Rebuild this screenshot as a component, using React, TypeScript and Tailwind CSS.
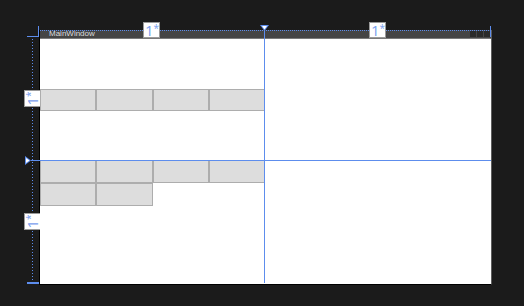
import React from 'react';

// WPF designer surface: window with a 2x2 grid, rulers and splitter adorners

const Cell: React.FC<{ tall?: boolean }> = ({ tall }) => (
  <div className={`${tall ? 'h-[23px]' : 'h-[22px]'} bg-[#dddddd] border border-[#adadad]`} />
);

const ColLabel: React.FC<{ left: string }> = ({ left }) => (
  <div
    className={`absolute ${left} top-[22px] w-[17px] h-[16px] bg-white border border-[#9a9a9a] flex items-center justify-center text-[15px] leading-none text-[#7aa0ee]`}
    style={{ fontFamily: '"Open Sans", "Liberation Sans", sans-serif' }}
  >
    <span className="pl-[1px]">1<span className="text-[10px] align-[4px]">*</span></span>
  </div>
);

const RowLabel: React.FC<{ top: string }> = ({ top }) => (
  <div
    className={`absolute left-[24px] ${top} w-[16px] h-[17px] bg-white border border-[#9a9a9a] border-r-0 flex items-center justify-center text-[15px] leading-none text-[#7aa0ee]`}
    style={{ fontFamily: '"Open Sans", "Liberation Sans", sans-serif' }}
  >
    <span className="-rotate-90 inline-block">1<span className="text-[10px] align-[4px]">*</span></span>
  </div>
);

const App: React.FC = () => {
  return (
    <div className="relative w-[524px] h-[306px] bg-[#1b1b1b] pl-[39px] pt-[30px] overflow-hidden">
      {/* window */}
      <div className="w-[453px] border-l border-r border-b border-l-black border-r-[#5e5e5e] border-b-black flex flex-col">
        <div className="h-[9px] bg-[#454545] border-b border-[#7a7a7a] flex items-center justify-between pl-[9px] pr-[1px]">
          <span
            className="text-[8px] leading-[8px] text-[#dcdcdc]"
            style={{ fontFamily: '"Liberation Sans", Arial, sans-serif' }}
          >
            MainWindow
          </span>
          <div className="flex gap-[1px] pb-[1px]">
            <div className="w-[6px] h-[6px] bg-[#2a2a2a]" />
            <div className="w-[6px] h-[6px] bg-[#2a2a2a]" />
            <div className="w-[6px] h-[6px] bg-[#2a2a2a]" />
          </div>
        </div>
        <div className="h-[245px] bg-white grid grid-cols-[225px_1fr] grid-rows-[121px_1fr]">
          <div className="flex items-center">
            <div className="grid grid-cols-4 w-full">
              <Cell />
              <Cell />
              <Cell />
              <Cell />
            </div>
          </div>
          <div />
          <div className="grid grid-cols-4 content-start">
            <Cell tall />
            <Cell tall />
            <Cell tall />
            <Cell tall />
            <Cell tall />
            <Cell tall />
          </div>
          <div />
        </div>
      </div>

      {/* top ruler */}
      <div className="absolute left-[40px] top-[30px] w-[451px] h-px bg-[repeating-linear-gradient(90deg,#5d8ded_0_1px,transparent_1px_2px)]" />
      <div className="absolute left-[38px] top-[26px] w-px h-[11px] bg-[#5d8ded]" />
      <div className="absolute left-[27px] top-[36px] w-[12px] h-px bg-[#5d8ded]" />
      <div className="absolute left-[490px] top-[26px] w-px h-[11px] bg-[#5d8ded]" />
      <ColLabel left="left-[143px]" />
      <ColLabel left="left-[369px]" />

      {/* left ruler */}
      <div className="absolute left-[32px] top-[39px] w-px h-[244px] bg-[repeating-linear-gradient(180deg,#5d8ded_0_1px,transparent_1px_3px)]" />
      <div className="absolute left-[27px] top-[282px] w-[12px] h-[2px] bg-[#5d8ded]" />
      <RowLabel top="top-[90px]" />
      <RowLabel top="top-[213px]" />

      {/* column splitter */}
      <div className="absolute left-[264px] top-[30px] w-px h-[253px] bg-[#5d8ded]" />
      <svg className="absolute left-[259px] top-[24px]" width="11" height="8" viewBox="0 0 11 8">
        <path d="M1 1 H10 L5.5 7 Z" fill="#5d8ded" />
        <path d="M3 2 H8 L5.5 5.5 Z" fill="#ffffff" />
      </svg>

      {/* row splitter */}
      <div className="absolute left-[31px] top-[160px] w-[460px] h-px bg-[#5d8ded]" />
      <svg className="absolute left-[24px] top-[155px]" width="8" height="11" viewBox="0 0 8 11">
        <path d="M1 1 V10 L7 5.5 Z" fill="#5d8ded" />
        <path d="M2 3 V8 L5.5 5.5 Z" fill="#ffffff" />
      </svg>
    </div>
  );
};

export default App;
